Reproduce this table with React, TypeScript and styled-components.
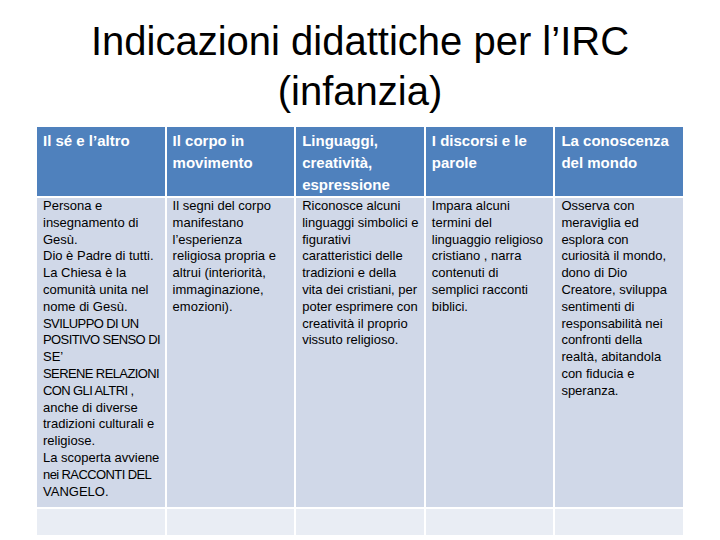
import styled, { createGlobalStyle } from "styled-components";

const GlobalStyle = createGlobalStyle`
  html, body {
    margin: 0;
    padding: 0;
    background: #ffffff;
  }
  body {
    font-family: "Liberation Sans", Arial, sans-serif;
  }
`;

const Slide = styled.div`
  width: 720px;
  height: 540px;
  display: flex;
  flex-direction: column;
  align-items: center;
  overflow: hidden;
`;

const Title = styled.h1`
  margin: 16px 0 0;
  font-family: "Liberation Sans", Arial, sans-serif;
  font-weight: 400;
  font-size: 40px;
  line-height: 50px;
  color: #000000;
  text-align: center;
`;

const Table = styled.div`
  margin-top: 11px;
  width: 646px;
  display: grid;
  grid-template-columns: repeat(5, minmax(0, 1fr));
  grid-template-rows: 69px 309px 26px;
  column-gap: 2px;
  row-gap: 2px;
`;

const HeadCell = styled.div`
  background: #4f81bd;
  color: #ffffff;
  padding: 3px 4px 0 6px;
  font-weight: 700;
  font-size: 15px;
  line-height: 22px;
  white-space: pre;
`;

const BodyCell = styled.div<{ $tone: "main" | "light" }>`
  background: ${(p) => (p.$tone === "main" ? "#d0d8e8" : "#e9edf4")};
  color: #000000;
  padding: 0 3px 0 6px;
  font-size: 13px;
  line-height: 16.8px;
`;

const Line = styled.span<{ $tight?: boolean }>`
  display: block;
  white-space: pre;
  letter-spacing: ${(p) => (p.$tight ? "-0.6px" : "0")};
`;

const headers = [
  "Il sé e l’altro",
  "Il corpo in\nmovimento",
  "Linguaggi,\ncreatività,\nespressione",
  "I discorsi e le\nparole",
  "La conoscenza\ndel mondo",
];

const tightLines = new Set([
  "SVILUPPO DI UN",
  "POSITIVO SENSO DI",
  "SERENE RELAZIONI",
  "CON GLI ALTRI ,",
  "nei RACCONTI DEL",
]);

const contents = [
  [
    "Persona e",
    "insegnamento di",
    "Gesù.",
    "Dio è Padre di tutti.",
    "La Chiesa è la",
    "comunità unita nel",
    "nome di Gesù.",
    "SVILUPPO DI UN",
    "POSITIVO SENSO DI",
    "SE’",
    "SERENE RELAZIONI",
    "CON GLI ALTRI ,",
    "anche di diverse",
    "tradizioni culturali e",
    "religiose.",
    "La scoperta avviene",
    "nei RACCONTI DEL",
    "VANGELO.",
  ],
  [
    "Il segni del corpo",
    "manifestano",
    "l’esperienza",
    "religiosa propria e",
    "altrui (interiorità,",
    "immaginazione,",
    "emozioni).",
  ],
  [
    "Riconosce alcuni",
    "linguaggi simbolici e",
    "figurativi",
    "caratteristici delle",
    "tradizioni e della",
    "vita dei cristiani, per",
    "poter esprimere con",
    "creatività il proprio",
    "vissuto religioso.",
  ],
  [
    "Impara alcuni",
    "termini del",
    "linguaggio religioso",
    "cristiano , narra",
    "contenuti di",
    "semplici racconti",
    "biblici.",
  ],
  [
    "Osserva con",
    "meraviglia ed",
    "esplora con",
    "curiosità il mondo,",
    "dono di Dio",
    "Creatore, sviluppa",
    "sentimenti di",
    "responsabilità nei",
    "confronti della",
    "realtà, abitandola",
    "con fiducia e",
    "speranza.",
  ],
];

export default function App() {
  return (
    <>
      <GlobalStyle />
      <Slide>
        <Title>
          Indicazioni didattiche per l’IRC
          <br />
          (infanzia)
        </Title>
        <Table>
          {headers.map((h) => (
            <HeadCell key={h}>{h}</HeadCell>
          ))}
          {contents.map((lines, i) => (
            <BodyCell $tone="main" key={"b" + i}>
              {lines.map((line, j) => (
                <Line key={j} $tight={tightLines.has(line)}>
                  {line}
                </Line>
              ))}
            </BodyCell>
          ))}
          {headers.map((h) => (
            <BodyCell $tone="light" key={"e" + h} />
          ))}
        </Table>
      </Slide>
    </>
  );
}
